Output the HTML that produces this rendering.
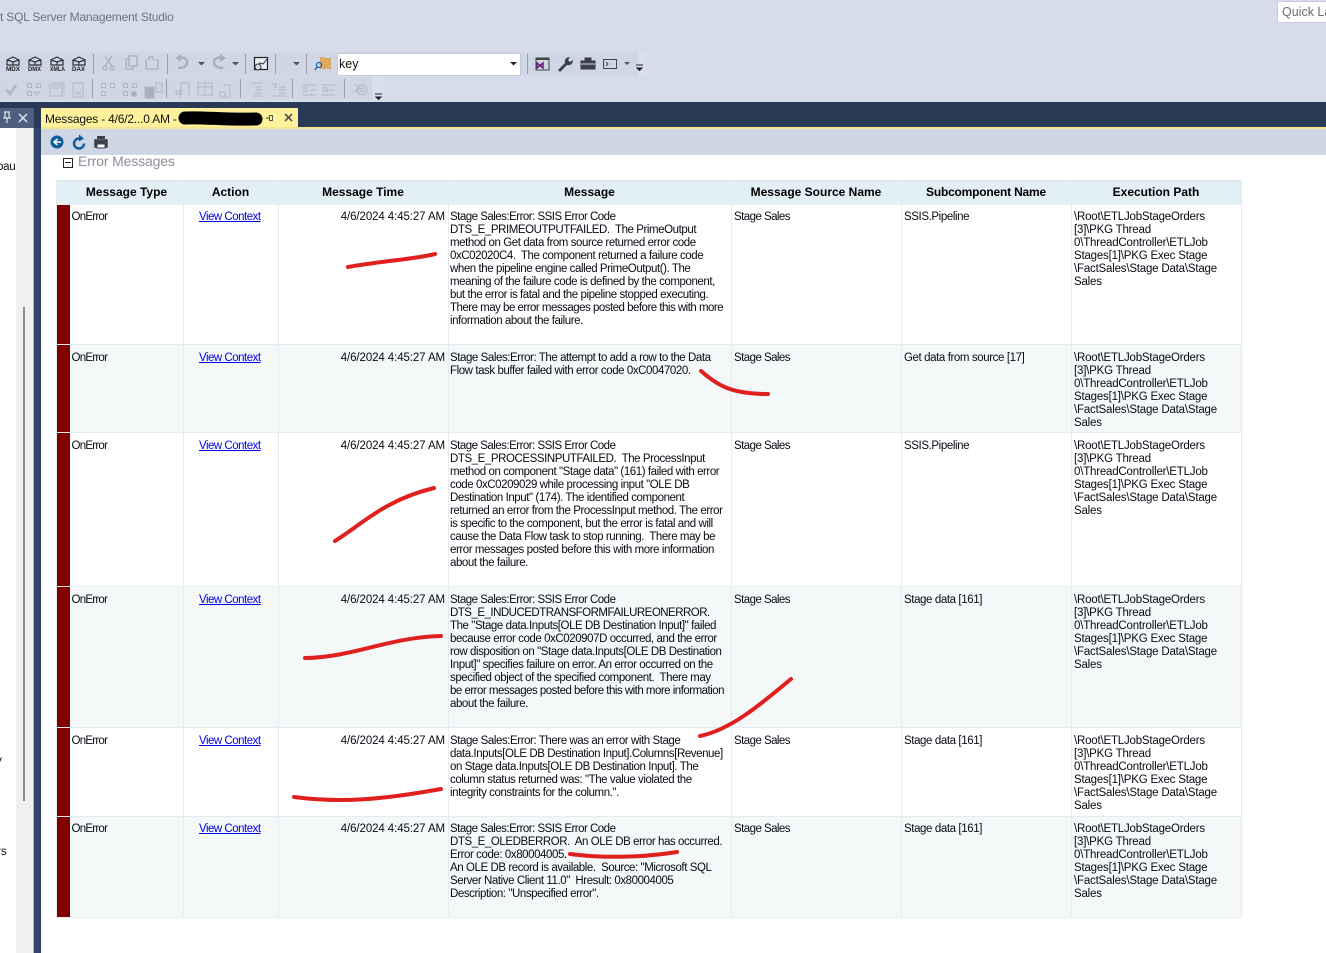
<!DOCTYPE html>
<html><head><meta charset="utf-8"><title>SSMS</title>
<style>
html,body{margin:0;padding:0;width:1326px;height:953px;overflow:hidden;background:#fff}
body{position:relative;font-family:"Liberation Sans",sans-serif;font-size:12px;color:#000}
.a{position:absolute}
.t{position:absolute;white-space:nowrap;line-height:13px;margin-top:1px;font-size:11.5px;letter-spacing:-.43px;color:#0a0a14}
.n{letter-spacing:-.51px}
.p{letter-spacing:-.2px}
.o{letter-spacing:-.4px}
.y{letter-spacing:-.55px}
.e{letter-spacing:-.75px}
.d{left:278px;width:167px;text-align:right;letter-spacing:-.1px}
.h{position:absolute;top:185px;line-height:14px;font-size:12px;font-weight:bold;text-align:center;white-space:nowrap;color:#000}
.r{position:absolute;left:57px;width:1185px}
.v{position:absolute;width:1px;background:#e4ecef}
.l{color:#0000ee;text-decoration:underline;letter-spacing:-.5px}
.s{fill:none;stroke:#e0201f;stroke-width:4;stroke-linecap:round}
</style></head><body>
<div class="a" style="left:0;top:0;width:1326px;height:102px;background:#d6dce9"></div>
<div class="a" style="left:0;top:10px;font-size:12px;letter-spacing:-.2px;color:#6c7384;white-space:nowrap;line-height:15px">t SQL Server Management Studio</div>
<div class="a" style="left:1277px;top:1px;width:60px;height:20px;background:#fff;border:1px solid #c4cbdb;color:#6d6d6d;font-size:12.5px;line-height:20px;padding-left:4px;white-space:nowrap">Quick Launch</div>

<div class="a" style="left:0;top:52px;width:638px;height:24px;background:#cfd6e5"></div>
<div class="a" style="left:638px;top:52px;width:8px;height:24px;background:#d9dfeb"></div>
<div class="a" style="left:0;top:77px;width:372px;height:23px;background:#cfd6e5"></div>
<div class="a" style="left:372px;top:77px;width:11px;height:23px;background:#d9dfeb"></div>

<svg class="a" style="left:0;top:50px" width="660" height="52" viewBox="0 0 660 52">
<g fill="none" stroke="#2c3038" stroke-width="1.2">
<path d="M7 10l6-3 6 3v5H7zM7 10l6 2 6-2M13 12v3"/><path d="M29 10l6-3 6 3v5H29zM29 10l6 2 6-2M35 12v3"/><path d="M51 10l6-3 6 3v5H51zM51 10l6 2 6-2M57 12v3"/><path d="M73 10l6-3 6 3v5H73zM73 10l6 2 6-2M79 12v3"/>
</g>
<g font-family="Liberation Sans,sans-serif" font-size="6.500" font-weight="bold" fill="#222">
<text x="6" y="21" textLength="14" lengthAdjust="spacingAndGlyphs">MDX</text><text x="28" y="21" textLength="13" lengthAdjust="spacingAndGlyphs">DMX</text><text x="50" y="21" textLength="15" lengthAdjust="spacingAndGlyphs">XMLA</text><text x="72" y="21" textLength="13" lengthAdjust="spacingAndGlyphs">DAX</text>
</g>
<g fill="none" stroke="#a9afbd" stroke-width="1.3">
<path d="M105 6l7 10M112 6l-7 10"/><circle cx="105" cy="18" r="2"/><circle cx="112" cy="18" r="2"/>
<path d="M129 9h-3v10h7v-3M129 6h8v10h-8z"/><path d="M147 10h-1v9h12v-9h-3M149 10V7h4v3"/>
<path d="M178 18c6 0 9-2 9-6s-4-5-9-4" stroke-width="2.4"/>
<path d="M223 18c-6 0-9-2-9-6s4-5 9-4" stroke-width="2.4"/>
</g>
<path d="M175 8l6-4v8zM226 8l-6-4v8z" fill="#a9afbd"/>
<path d="M198 12h7l-3.500 3.500zM232 12h7l-3.500 3.500zM293 12h7l-3.500 3.500zM624 12h6l-3 3z" fill="#555"/>
<g fill="#98a0b0"><rect x="93" y="4" width="1" height="20"/><rect x="167" y="4" width="1" height="20"/><rect x="245" y="4" width="1" height="20"/><rect x="275" y="4" width="1" height="20"/><rect x="306" y="4" width="1" height="20"/><rect x="527" y="4" width="1" height="20"/>
<rect x="92" y="29" width="1" height="19"/><rect x="166" y="29" width="1" height="19"/><rect x="240" y="29" width="1" height="19"/><rect x="292" y="29" width="1" height="19"/><rect x="344" y="29" width="1" height="19"/></g>
<rect x="254.500" y="7.500" width="13" height="12" fill="#e9edf4" stroke="#222" stroke-width="1.200"/><path d="M256 17l4-4 3 1 4-5" fill="none" stroke="#333"/><circle cx="258" cy="17" r="3" fill="#d6dce9" stroke="#333"/>
<path d="M320 7h4l1 1h6v11h-11z" fill="#dcaa62"/><circle cx="319" cy="15" r="2.500" fill="none" stroke="#1460aa" stroke-width="1.200"/><path d="M317 17l-2 3" stroke="#1460aa" stroke-width="1.400"/>
<rect x="536" y="8" width="13" height="12" fill="none" stroke="#444"/><path d="M536 9h13" stroke="#444" stroke-width="2"/><path d="M537 13l6 5v-5l-6 5z" fill="none" stroke="#68217a" stroke-width="1.500"/>
<path d="M558 20l7-7c-1-3 1-6 5-6l-2 3 2 2 3-2c0 4-3 6-6 5l-7 7z" fill="#3c3f48"/>
<path d="M581 11h14v8h-14zM585 11V8h6v3" fill="#3c3f48" stroke="#3c3f48"/><path d="M581 14h14" stroke="#d6dce9"/>
<rect x="603.500" y="9.500" width="13" height="9" fill="none" stroke="#444"/><path d="M606 12l2 2-2 2" fill="none" stroke="#444"/>
<path d="M636 15h7M637 18h5l-2.500 2.500z" fill="#222" stroke="#222"/>
<g fill="none" stroke="#b0b6c3" stroke-width="1">
<path d="M7 40l3 4 6-9" stroke-width="2.800"/>
<path d="M27.500 33.500h4v4h-4zM36.500 33.500h4v4h-4zM27.500 41.500h4v4h-4zM34 42h6l-3 3z"/>
<path d="M50 35h12v11H50zM52 33h12v11M52 38h8"/><path d="M73 33h10v14H73zM75 42h6M75 44h6"/>
<path d="M101.500 33.500h4v4h-4zM110.500 33.500h4v4h-4zM101.500 41.500h4v4h-4z"/><path d="M123.500 33.500h4v4h-4zM132.500 33.500h4v4h-4zM123.500 41.500h4v4h-4z"/><circle cx="134" cy="44" r="2.500" fill="#a9afbd"/>
<path d="M145 37h9v11h-9z" fill="#a9afbd"/><path d="M156 33h6v9h-6z"/>
<path d="M176 44h4v-3h-4zM181 48V33h8v12"/><path d="M198 33h14v12h-14zM198 37h14M205 33v12" /><path d="M220 42h5v5h-5zM224 35h6v12h-4"/>
<path d="M252 33h10M255 37h7M255 40h7M255 43h7M252 46h10"/><path d="M272 34h4v3h-2M279 37h7M279 40h7M279 43h7M273 46h13"/>
<path d="M302 38h6M302 41h6M303 35h13M303 45h13M317 40h-7" /><path d="M322 38h6M322 41h6M322 35h13M322 45h13M326 40h9" />
<path d="M354 34l6 4-6 4"/><circle cx="362" cy="40" r="5"/><circle cx="362" cy="40" r="2"/>
</g>
<path d="M375 44h7M376 47h5l-2.500 2.500z" fill="#222" stroke="#222"/>
</svg>

<div class="a" style="left:337px;top:53px;width:182px;height:21px;background:#fff;border:1px solid #c4cbdb"></div>
<div class="a" style="left:339px;top:57px;font-size:12.5px;line-height:14px;color:#111">key</div>
<svg class="a" style="left:505px;top:58px" width="16" height="10"><path d="M5 4h7L8.500 7.500z" fill="#222"/></svg>

<div class="a" style="left:0;top:102px;width:1326px;height:26px;background:#2a3a56"></div>
<div class="a" style="left:0;top:108px;width:34px;height:20px;background:#4d6082"></div>
<svg class="a" style="left:0;top:108px" width="34" height="20"><path d="M4 4h6M5 4v6h4V4M3 10h8M7 10v5" fill="none" stroke="#dfe4ee" stroke-width="1.200"/><path d="M19 6l8 8M27 6l-8 8" stroke="#dfe4ee" stroke-width="1.500"/></svg>
<div class="a" style="left:41px;top:108px;width:257px;height:20px;background:#fff29d"></div>
<div class="a" style="left:45px;top:112px;font-size:12px;line-height:14px;letter-spacing:-.2px;color:#111;white-space:nowrap">Messages - 4/6/2...0 AM -</div>
<svg class="a" style="left:170px;top:105px" width="135" height="26"><path d="M15 13c20-1 40 2 71 1" fill="none" stroke="#000" stroke-width="13" stroke-linecap="round"/>
<path d="M96 13h3" fill="none" stroke="#555" stroke-width="1.200"/><rect x="99.500" y="10.500" width="3" height="5" fill="none" stroke="#555"/><path d="M115 9l7 7M122 9l-7 7" stroke="#555" stroke-width="1.600"/></svg>
<div class="a" style="left:41px;top:127px;width:1285px;height:2px;background:#f7e58d"></div>
<div class="a" style="left:41px;top:129px;width:1285px;height:26px;background:#cfd6e5"></div>
<svg class="a" style="left:48px;top:133px" width="64" height="18">
<circle cx="9" cy="9" r="6.500" fill="#0e5c9e"/><path d="M13 9H7M9.500 6L6 9l3.500 3" fill="none" stroke="#fff" stroke-width="1.600"/>
<path d="M31 5.500a5 5 0 1 0 5 5" fill="none" stroke="#0e5c9e" stroke-width="2.400"/><path d="M31 1.500l5 4-5 3z" fill="#0e5c9e"/>
<path d="M47 7h12v7H47z" fill="#3c3f48" stroke="#3c3f48" stroke-width="1.500"/><path d="M49 3h8v3h-8z" fill="#3c3f48"/><path d="M49 11h8v4h-8z" fill="#fff" stroke="#3c3f48"/>
</svg>

<div class="a" style="left:0;top:128px;width:34px;height:825px;background:#fff"></div>
<div class="a" style="left:16px;top:128px;width:17px;height:825px;background:#f0f0f0"></div>
<div class="a" style="left:23px;top:307px;width:2px;height:494px;background:#8a8a8a"></div>
<div class="a" style="left:33px;top:128px;width:1px;height:825px;background:#a9b4c6"></div>
<div class="a" style="left:34px;top:128px;width:7px;height:825px;background:#2f4468"></div>
<div class="t" style="left:-3px;top:160px;color:#111;letter-spacing:-.3px;width:19px;overflow:hidden">bau</div>
<div class="t" style="left:-4px;top:754px;color:#111;letter-spacing:0">y</div>
<div class="t" style="left:-3px;top:845px;color:#111;letter-spacing:0">rs</div>

<div class="a" style="left:63px;top:158px;width:8px;height:8px;border:1px solid #222;background:#fff"></div>
<div class="a" style="left:65px;top:162px;width:6px;height:1px;background:#222"></div>
<div class="a" style="left:78px;top:153px;font-size:14px;line-height:16px;color:#8d8d99;white-space:nowrap;letter-spacing:-.15px">Error Messages</div>

<div class="r" style="top:180px;height:25px;background:#e2eff4;border-top:1px solid #d8e4ea;box-sizing:border-box"></div>
<div class="r" style="top:345px;height:88px;background:#f4f8f9"></div>
<div class="r" style="top:587px;height:140px;background:#f4f8f9"></div>
<div class="r" style="top:816px;height:101px;background:#f4f8f9"></div>
<div class="r" style="top:344px;height:1px;background:#e4ecef"></div>
<div class="r" style="top:432px;height:1px;background:#e4ecef"></div>
<div class="r" style="top:586px;height:1px;background:#e4ecef"></div>
<div class="r" style="top:727px;height:1px;background:#e4ecef"></div>
<div class="r" style="top:816px;height:1px;background:#e4ecef"></div>
<div class="r" style="top:917px;height:1px;background:#e4ecef"></div>
<div class="v" style="left:56px;top:180px;height:738px"></div>
<div class="v" style="left:183px;top:180px;height:738px"></div>
<div class="v" style="left:278px;top:180px;height:738px"></div>
<div class="v" style="left:448px;top:180px;height:738px"></div>
<div class="v" style="left:731px;top:180px;height:738px"></div>
<div class="v" style="left:901px;top:180px;height:738px"></div>
<div class="v" style="left:1071px;top:180px;height:738px"></div>
<div class="v" style="left:1241px;top:180px;height:738px"></div>
<div class="a" style="left:57px;top:205px;width:13px;height:139px;background:#800000"></div>
<div class="a" style="left:57px;top:345px;width:13px;height:87px;background:#800000"></div>
<div class="a" style="left:57px;top:433px;width:13px;height:153px;background:#800000"></div>
<div class="a" style="left:57px;top:587px;width:13px;height:140px;background:#800000"></div>
<div class="a" style="left:57px;top:728px;width:13px;height:88px;background:#800000"></div>
<div class="a" style="left:57px;top:817px;width:13px;height:100px;background:#800000"></div>

<div class="h" style="left:70px;width:113px">Message Type</div>
<div class="h" style="left:183px;width:95px">Action</div>
<div class="h" style="left:278px;width:170px">Message Time</div>
<div class="h" style="left:448px;width:283px">Message</div>
<div class="h" style="left:731px;width:170px">Message Source Name</div>
<div class="h" style="left:901px;width:170px;letter-spacing:-.2px">Subcomponent Name</div>
<div class="h" style="left:1071px;width:170px">Execution Path</div>

<div class="t e" style="left:71.500px;top:210px">OnError</div>
<div class="t l" style="left:199px;top:210px">View Context</div>
<div class="t d" style="top:210px">4/6/2024 4:45:27 AM</div>
<div class="t" style="left:450px;top:210px"><span class="n">Stage Sales:Error: SSIS Error Code</span><br>DTS_E_PRIMEOUTPUTFAILED.&nbsp; The PrimeOutput<br>method on Get data from source returned error code<br>0xC02020C4.&nbsp; The component returned a failure code<br>when the pipeline engine called PrimeOutput(). The<br>meaning of the failure code is defined by the component,<br>but the error is fatal and the pipeline stopped executing.<br><span class="n">There may be error messages posted before this with more</span><br>information about the failure.</div>
<div class="t y" style="left:734px;top:210px">Stage Sales</div>
<div class="t o" style="left:904px;top:210px">SSIS.Pipeline</div>
<div class="t p" style="left:1074px;top:210px">\Root\ETLJobStageOrders<br>[3]\PKG Thread<br>0\ThreadController\ETLJob<br>Stages[1]\PKG Exec Stage<br>\FactSales\Stage Data\Stage<br>Sales</div>

<div class="t e" style="left:71.500px;top:351px">OnError</div>
<div class="t l" style="left:199px;top:351px">View Context</div>
<div class="t d" style="top:351px">4/6/2024 4:45:27 AM</div>
<div class="t" style="left:450px;top:351px">Stage Sales:Error: The attempt to add a row to the Data<br>Flow task buffer failed with error code 0xC0047020.</div>
<div class="t y" style="left:734px;top:351px">Stage Sales</div>
<div class="t o" style="left:904px;top:351px">Get data from source [17]</div>
<div class="t p" style="left:1074px;top:351px">\Root\ETLJobStageOrders<br>[3]\PKG Thread<br>0\ThreadController\ETLJob<br>Stages[1]\PKG Exec Stage<br>\FactSales\Stage Data\Stage<br>Sales</div>

<div class="t e" style="left:71.500px;top:439px">OnError</div>
<div class="t l" style="left:199px;top:439px">View Context</div>
<div class="t d" style="top:439px">4/6/2024 4:45:27 AM</div>
<div class="t" style="left:450px;top:439px"><span class="n">Stage Sales:Error: SSIS Error Code</span><br>DTS_E_PROCESSINPUTFAILED.&nbsp; The ProcessInput<br>method on component "Stage data" (161) failed with error<br>code 0xC0209029 while processing input "OLE DB<br>Destination Input" (174). The identified component<br>returned an error from the ProcessInput method. The error<br>is specific to the component, but the error is fatal and will<br>cause the Data Flow task to stop running.&nbsp; There may be<br>error messages posted before this with more information<br>about the failure.</div>
<div class="t y" style="left:734px;top:439px">Stage Sales</div>
<div class="t o" style="left:904px;top:439px">SSIS.Pipeline</div>
<div class="t p" style="left:1074px;top:439px">\Root\ETLJobStageOrders<br>[3]\PKG Thread<br>0\ThreadController\ETLJob<br>Stages[1]\PKG Exec Stage<br>\FactSales\Stage Data\Stage<br>Sales</div>

<div class="t e" style="left:71.500px;top:593px">OnError</div>
<div class="t l" style="left:199px;top:593px">View Context</div>
<div class="t d" style="top:593px">4/6/2024 4:45:27 AM</div>
<div class="t" style="left:450px;top:593px"><span class="n">Stage Sales:Error: SSIS Error Code</span><br><span class="n">DTS_E_INDUCEDTRANSFORMFAILUREONERROR.</span><br>The "Stage data.Inputs[OLE DB Destination Input]" failed<br>because error code 0xC020907D occurred, and the error<br>row disposition on "Stage data.Inputs[OLE DB Destination<br>Input]" specifies failure on error. An error occurred on the<br>specified object of the specified component.&nbsp; There may<br><span class="n">be error messages posted before this with more information</span><br>about the failure.</div>
<div class="t y" style="left:734px;top:593px">Stage Sales</div>
<div class="t o" style="left:904px;top:593px">Stage data [161]</div>
<div class="t p" style="left:1074px;top:593px">\Root\ETLJobStageOrders<br>[3]\PKG Thread<br>0\ThreadController\ETLJob<br>Stages[1]\PKG Exec Stage<br>\FactSales\Stage Data\Stage<br>Sales</div>

<div class="t e" style="left:71.500px;top:734px">OnError</div>
<div class="t l" style="left:199px;top:734px">View Context</div>
<div class="t d" style="top:734px">4/6/2024 4:45:27 AM</div>
<div class="t" style="left:450px;top:734px">Stage Sales:Error: There was an error with Stage<br>data.Inputs[OLE DB Destination Input].Columns[Revenue]<br>on Stage data.Inputs[OLE DB Destination Input]. The<br>column status returned was: "The value violated the<br>integrity constraints for the column.".</div>
<div class="t y" style="left:734px;top:734px">Stage Sales</div>
<div class="t o" style="left:904px;top:734px">Stage data [161]</div>
<div class="t p" style="left:1074px;top:734px">\Root\ETLJobStageOrders<br>[3]\PKG Thread<br>0\ThreadController\ETLJob<br>Stages[1]\PKG Exec Stage<br>\FactSales\Stage Data\Stage<br>Sales</div>

<div class="t e" style="left:71.500px;top:822px">OnError</div>
<div class="t l" style="left:199px;top:822px">View Context</div>
<div class="t d" style="top:822px">4/6/2024 4:45:27 AM</div>
<div class="t" style="left:450px;top:822px"><span class="n">Stage Sales:Error: SSIS Error Code</span><br>DTS_E_OLEDBERROR.&nbsp; An OLE DB error has occurred.<br>Error code: 0x80004005.<br>An OLE DB record is available.&nbsp; Source: "Microsoft SQL<br>Server Native Client 11.0"&nbsp; Hresult: 0x80004005<br>Description: "Unspecified error".</div>
<div class="t y" style="left:734px;top:822px">Stage Sales</div>
<div class="t o" style="left:904px;top:822px">Stage data [161]</div>
<div class="t p" style="left:1074px;top:822px">\Root\ETLJobStageOrders<br>[3]\PKG Thread<br>0\ThreadController\ETLJob<br>Stages[1]\PKG Exec Stage<br>\FactSales\Stage Data\Stage<br>Sales</div>

<svg class="a" style="left:0;top:0;pointer-events:none" width="1326" height="953">
<path class="s" d="M348 267C380 261 410 260 435 254"/>
<path class="s" d="M701 371C718 386 732 394 768 394"/>
<path class="s" d="M335 541C365 522 385 500 434 488"/>
<path class="s" d="M305 658C350 658 390 637 441 636"/>
<path class="s" d="M700 736C730 730 760 705 791 679"/>
<path class="s" d="M294 797C340 803 380 800 441 789"/>
<path class="s" d="M570 854C600 858 640 858 677 852"/>
</svg>
</body></html>
